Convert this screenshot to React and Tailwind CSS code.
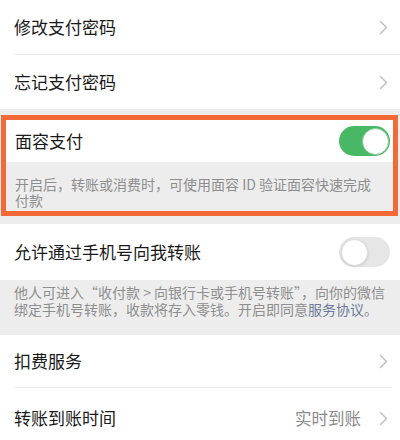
import { useState } from "react";

const FONT = { fontFamily: '"Noto Sans CJK SC", "Noto Sans", sans-serif' };

function Chevron() {
  return (
    <svg width="9" height="15" viewBox="0 0 9 15" className="shrink-0">
      <path d="M1.5 1.5 L7.5 7.5 L1.5 13.5" fill="none" stroke="#c2c2c2" strokeWidth="1.6" strokeLinecap="round" strokeLinejoin="round" />
    </svg>
  );
}

function Toggle({ on, onClick }) {
  return (
    <button
      type="button"
      onClick={onClick}
      className={`relative h-[30px] w-[51px] shrink-0 rounded-full ${on ? "bg-[#48b865]" : "bg-[#e6e6e6]"}`}
    >
      <span
        className={`absolute top-[1.5px] h-[27px] w-[27px] rounded-full border bg-white ${
          on ? "right-[1.5px] border-[#8cc99b]" : "left-[1.5px] border-[#dcdcdc] shadow-sm"
        }`}
      />
    </button>
  );
}

function LinkRow({ label, value, height = "h-[54px]" }) {
  return (
    <div className={`flex ${height} items-center justify-between bg-white pl-[14px] pr-[12px]`}>
      <span className="text-[17px] text-[#1a1a1a]">{label}</span>
      <div className="flex items-center gap-[18px]">
        {value ? <span className="text-[16.5px] text-[#8a8a8a]">{value}</span> : null}
        <Chevron />
      </div>
    </div>
  );
}

export default function App() {
  const [faceOn, setFaceOn] = useState(true);
  const [phoneOn, setPhoneOn] = useState(false);

  return (
    <div className="h-[440px] w-[400px] overflow-hidden bg-[#ededed]" style={FONT}>
      <div className="bg-white">
        <LinkRow label="修改支付密码" />
        <div className="ml-[14px] h-px bg-[#ececec]" />
        <LinkRow label="忘记支付密码" />
      </div>

      <div className="mt-[6px] ml-px mr-[2px] border-[5px] border-[#f36a38]">
        <div className="flex h-[42px] items-center justify-between bg-white pl-[9px] pr-[3px]">
          <span className="text-[17px] text-[#1a1a1a]">面容支付</span>
          <Toggle on={faceOn} onClick={() => setFaceOn(!faceOn)} />
        </div>
        <div className="h-[49px] overflow-hidden bg-[#ededed] pl-[9px] pr-[4px] pt-[14px] text-[14px] leading-[16px] text-[#8e8e8e]">
          开启后，转账或消费时，可使用面容 ID 验证面容快速完成
          <br />
          付款
        </div>
      </div>

      <div className="mt-[8px] flex h-[56px] items-center justify-between bg-white pl-[14px] pr-[10px]">
        <span className="text-[17px] text-[#1a1a1a]">允许通过手机号向我转账</span>
        <Toggle on={phoneOn} onClick={() => setPhoneOn(!phoneOn)} />
      </div>
      <div className="h-[55px] bg-[#ededed] pl-[14px] pr-[12px] pt-[4px] text-[14px] leading-[16.5px] text-[#8e8e8e]">
        他人可进入“收付款 &gt; 向银行卡或手机号转账”，向你的微信
        <br />
        绑定手机号转账，收款将存入零钱。开启即同意<span className="text-[#6e7a99]">服务协议</span>。
      </div>

      <div className="bg-white">
        <LinkRow label="扣费服务" height="h-[52px]" />
        <div className="ml-[14px] mr-[8px] h-px bg-[#ececec]" />
        <LinkRow label="转账到账时间" value="实时到账" height="h-[60px]" />
      </div>
    </div>
  );
}
